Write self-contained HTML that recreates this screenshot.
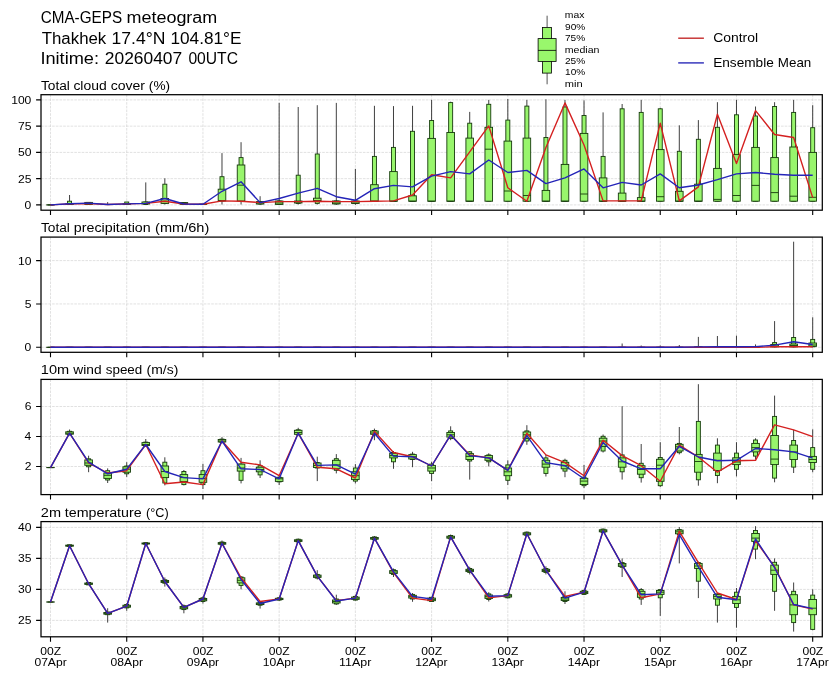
<!DOCTYPE html><html><head><meta charset="utf-8"><style>html,body{margin:0;padding:0;background:#fff;width:840px;height:680px;overflow:hidden}svg{display:block;will-change:transform}</style></head><body>
<svg width="840" height="680" viewBox="0 0 840 680">
<rect width="840" height="680" fill="#fff"/>
<g font-family="Liberation Sans, sans-serif" fill="#000">
<text x="40.73" y="22.90" font-size="16.0" textLength="81.37" lengthAdjust="spacingAndGlyphs">CMA-GEPS</text>
<text x="126.51" y="22.90" font-size="16.0" textLength="90.77" lengthAdjust="spacingAndGlyphs">meteogram</text>
<text x="41.72" y="43.70" font-size="16.0" textLength="64.55" lengthAdjust="spacingAndGlyphs">Thakhek</text>
<text x="111.56" y="43.70" font-size="16.0" textLength="53.87" lengthAdjust="spacingAndGlyphs">17.4°N</text>
<text x="170.49" y="43.70" font-size="16.0" textLength="70.95" lengthAdjust="spacingAndGlyphs">104.81°E</text>
<text x="40.42" y="64.20" font-size="16.0" textLength="58.64" lengthAdjust="spacingAndGlyphs">Initime:</text>
<text x="104.83" y="64.20" font-size="16.0" textLength="77.35" lengthAdjust="spacingAndGlyphs">20260407</text>
<text x="188.39" y="64.20" font-size="16.0" textLength="49.61" lengthAdjust="spacingAndGlyphs">00UTC</text>
</g>
<path d="M50.50 94.70V210.20M126.72 94.70V210.20M202.94 94.70V210.20M279.16 94.70V210.20M355.38 94.70V210.20M431.60 94.70V210.20M507.82 94.70V210.20M584.03 94.70V210.20M660.25 94.70V210.20M736.47 94.70V210.20M812.69 94.70V210.20M41.00 204.90H822.30M41.00 178.65H822.30M41.00 152.40H822.30M41.00 126.15H822.30M41.00 99.90H822.30" stroke="#d4d4d4" stroke-width="0.7" stroke-dasharray="2.6 1.1" fill="none"/>
<path d="M50.50 210.20V215.10M126.72 210.20V215.10M202.94 210.20V215.10M279.16 210.20V215.10M355.38 210.20V215.10M431.60 210.20V215.10M507.82 210.20V215.10M584.03 210.20V215.10M660.25 210.20V215.10M736.47 210.20V215.10M812.69 210.20V215.10M41.00 204.90H36.10M41.00 178.65H36.10M41.00 152.40H36.10M41.00 126.15H36.10M41.00 99.90H36.10" stroke="#000" stroke-width="1.1" fill="none"/>
<g font-family="Liberation Sans, sans-serif" fill="#000">
<text x="24.64" y="208.80" font-size="11.4" textLength="6.73" lengthAdjust="spacingAndGlyphs">0</text>
<text x="17.95" y="182.55" font-size="11.4" textLength="13.46" lengthAdjust="spacingAndGlyphs">25</text>
<text x="17.91" y="156.30" font-size="11.4" textLength="13.46" lengthAdjust="spacingAndGlyphs">50</text>
<text x="17.95" y="130.05" font-size="11.4" textLength="13.46" lengthAdjust="spacingAndGlyphs">75</text>
<text x="11.18" y="103.80" font-size="11.4" textLength="20.19" lengthAdjust="spacingAndGlyphs">100</text>
</g>
<g font-family="Liberation Sans, sans-serif" fill="#000"><text x="40.91" y="89.50" font-size="12.0" textLength="28.96" lengthAdjust="spacingAndGlyphs">Total</text></g>
<g font-family="Liberation Sans, sans-serif" fill="#000"><text x="73.41" y="89.50" font-size="12.0" textLength="33.29" lengthAdjust="spacingAndGlyphs">cloud</text></g>
<g font-family="Liberation Sans, sans-serif" fill="#000"><text x="110.70" y="89.50" font-size="12.0" textLength="34.33" lengthAdjust="spacingAndGlyphs">cover</text></g>
<g font-family="Liberation Sans, sans-serif" fill="#000"><text x="148.86" y="89.50" font-size="12.0" textLength="21.19" lengthAdjust="spacingAndGlyphs">(%)</text></g>
<rect x="41.0" y="94.7" width="781.30" height="115.50" fill="none" stroke="#000" stroke-width="1.25"/>
<path d="M50.50 237.10V352.30M126.72 237.10V352.30M202.94 237.10V352.30M279.16 237.10V352.30M355.38 237.10V352.30M431.60 237.10V352.30M507.82 237.10V352.30M584.03 237.10V352.30M660.25 237.10V352.30M736.47 237.10V352.30M812.69 237.10V352.30M41.00 347.30H822.30M41.00 303.95H822.30M41.00 260.60H822.30" stroke="#d4d4d4" stroke-width="0.7" stroke-dasharray="2.6 1.1" fill="none"/>
<path d="M50.50 352.30V357.20M126.72 352.30V357.20M202.94 352.30V357.20M279.16 352.30V357.20M355.38 352.30V357.20M431.60 352.30V357.20M507.82 352.30V357.20M584.03 352.30V357.20M660.25 352.30V357.20M736.47 352.30V357.20M812.69 352.30V357.20M41.00 347.30H36.10M41.00 303.95H36.10M41.00 260.60H36.10" stroke="#000" stroke-width="1.1" fill="none"/>
<g font-family="Liberation Sans, sans-serif" fill="#000">
<text x="24.64" y="351.20" font-size="11.4" textLength="6.73" lengthAdjust="spacingAndGlyphs">0</text>
<text x="24.68" y="307.85" font-size="11.4" textLength="6.73" lengthAdjust="spacingAndGlyphs">5</text>
<text x="17.91" y="264.50" font-size="11.4" textLength="13.46" lengthAdjust="spacingAndGlyphs">10</text>
</g>
<g font-family="Liberation Sans, sans-serif" fill="#000"><text x="40.91" y="231.75" font-size="12.0" textLength="28.96" lengthAdjust="spacingAndGlyphs">Total</text></g>
<g font-family="Liberation Sans, sans-serif" fill="#000"><text x="73.88" y="231.75" font-size="12.0" textLength="76.84" lengthAdjust="spacingAndGlyphs">precipitation</text></g>
<g font-family="Liberation Sans, sans-serif" fill="#000"><text x="155.10" y="231.75" font-size="12.0" textLength="54.21" lengthAdjust="spacingAndGlyphs">(mm/6h)</text></g>
<rect x="41.0" y="237.1" width="781.30" height="115.20" fill="none" stroke="#000" stroke-width="1.25"/>
<path d="M50.50 379.40V494.60M126.72 379.40V494.60M202.94 379.40V494.60M279.16 379.40V494.60M355.38 379.40V494.60M431.60 379.40V494.60M507.82 379.40V494.60M584.03 379.40V494.60M660.25 379.40V494.60M736.47 379.40V494.60M812.69 379.40V494.60M41.00 466.50H822.30M41.00 436.50H822.30M41.00 406.50H822.30" stroke="#d4d4d4" stroke-width="0.7" stroke-dasharray="2.6 1.1" fill="none"/>
<path d="M50.50 494.60V499.50M126.72 494.60V499.50M202.94 494.60V499.50M279.16 494.60V499.50M355.38 494.60V499.50M431.60 494.60V499.50M507.82 494.60V499.50M584.03 494.60V499.50M660.25 494.60V499.50M736.47 494.60V499.50M812.69 494.60V499.50M41.00 466.50H36.10M41.00 436.50H36.10M41.00 406.50H36.10" stroke="#000" stroke-width="1.1" fill="none"/>
<g font-family="Liberation Sans, sans-serif" fill="#000">
<text x="24.78" y="470.40" font-size="11.4" textLength="6.73" lengthAdjust="spacingAndGlyphs">2</text>
<text x="24.53" y="440.40" font-size="11.4" textLength="6.73" lengthAdjust="spacingAndGlyphs">4</text>
<text x="24.70" y="410.40" font-size="11.4" textLength="6.73" lengthAdjust="spacingAndGlyphs">6</text>
</g>
<g font-family="Liberation Sans, sans-serif" fill="#000"><text x="40.79" y="373.90" font-size="12.0" textLength="28.37" lengthAdjust="spacingAndGlyphs">10m</text></g>
<g font-family="Liberation Sans, sans-serif" fill="#000"><text x="73.32" y="373.90" font-size="12.0" textLength="28.27" lengthAdjust="spacingAndGlyphs">wind</text></g>
<g font-family="Liberation Sans, sans-serif" fill="#000"><text x="105.73" y="373.90" font-size="12.0" textLength="36.54" lengthAdjust="spacingAndGlyphs">speed</text></g>
<g font-family="Liberation Sans, sans-serif" fill="#000"><text x="146.64" y="373.90" font-size="12.0" textLength="31.73" lengthAdjust="spacingAndGlyphs">(m/s)</text></g>
<rect x="41.0" y="379.4" width="781.30" height="115.20" fill="none" stroke="#000" stroke-width="1.25"/>
<path d="M50.50 521.60V636.80M126.72 521.60V636.80M202.94 521.60V636.80M279.16 521.60V636.80M355.38 521.60V636.80M431.60 521.60V636.80M507.82 521.60V636.80M584.03 521.60V636.80M660.25 521.60V636.80M736.47 521.60V636.80M812.69 521.60V636.80M41.00 620.40H822.30M41.00 589.40H822.30M41.00 558.40H822.30M41.00 527.40H822.30" stroke="#d4d4d4" stroke-width="0.7" stroke-dasharray="2.6 1.1" fill="none"/>
<path d="M50.50 636.80V641.70M126.72 636.80V641.70M202.94 636.80V641.70M279.16 636.80V641.70M355.38 636.80V641.70M431.60 636.80V641.70M507.82 636.80V641.70M584.03 636.80V641.70M660.25 636.80V641.70M736.47 636.80V641.70M812.69 636.80V641.70M41.00 620.40H36.10M41.00 589.40H36.10M41.00 558.40H36.10M41.00 527.40H36.10" stroke="#000" stroke-width="1.1" fill="none"/>
<g font-family="Liberation Sans, sans-serif" fill="#000">
<text x="17.95" y="624.30" font-size="11.4" textLength="13.46" lengthAdjust="spacingAndGlyphs">25</text>
<text x="17.91" y="593.30" font-size="11.4" textLength="13.46" lengthAdjust="spacingAndGlyphs">30</text>
<text x="17.95" y="562.30" font-size="11.4" textLength="13.46" lengthAdjust="spacingAndGlyphs">35</text>
<text x="17.91" y="531.30" font-size="11.4" textLength="13.46" lengthAdjust="spacingAndGlyphs">40</text>
</g>
<g font-family="Liberation Sans, sans-serif" fill="#000"><text x="40.87" y="516.60" font-size="12.0" textLength="20.19" lengthAdjust="spacingAndGlyphs">2m</text></g>
<g font-family="Liberation Sans, sans-serif" fill="#000"><text x="64.88" y="516.60" font-size="12.0" textLength="76.75" lengthAdjust="spacingAndGlyphs">temperature</text></g>
<g font-family="Liberation Sans, sans-serif" fill="#000"><text x="146.01" y="516.60" font-size="12.0" textLength="22.67" lengthAdjust="spacingAndGlyphs">(°C)</text></g>
<rect x="41.0" y="521.6" width="781.30" height="115.20" fill="none" stroke="#000" stroke-width="1.25"/>
<g font-family="Liberation Sans, sans-serif" fill="#000">
<text x="40.23" y="654.50" font-size="11.6" textLength="20.85" lengthAdjust="spacingAndGlyphs">00Z</text>
<text x="34.42" y="666.40" font-size="11.6" textLength="32.29" lengthAdjust="spacingAndGlyphs">07Apr</text>
<text x="116.45" y="654.50" font-size="11.6" textLength="20.85" lengthAdjust="spacingAndGlyphs">00Z</text>
<text x="110.64" y="666.40" font-size="11.6" textLength="32.29" lengthAdjust="spacingAndGlyphs">08Apr</text>
<text x="192.67" y="654.50" font-size="11.6" textLength="20.85" lengthAdjust="spacingAndGlyphs">00Z</text>
<text x="186.86" y="666.40" font-size="11.6" textLength="32.29" lengthAdjust="spacingAndGlyphs">09Apr</text>
<text x="268.89" y="654.50" font-size="11.6" textLength="20.85" lengthAdjust="spacingAndGlyphs">00Z</text>
<text x="262.85" y="666.40" font-size="11.6" textLength="32.29" lengthAdjust="spacingAndGlyphs">10Apr</text>
<text x="345.10" y="654.50" font-size="11.6" textLength="20.85" lengthAdjust="spacingAndGlyphs">00Z</text>
<text x="339.07" y="666.40" font-size="11.6" textLength="32.29" lengthAdjust="spacingAndGlyphs">11Apr</text>
<text x="421.32" y="654.50" font-size="11.6" textLength="20.85" lengthAdjust="spacingAndGlyphs">00Z</text>
<text x="415.29" y="666.40" font-size="11.6" textLength="32.29" lengthAdjust="spacingAndGlyphs">12Apr</text>
<text x="497.54" y="654.50" font-size="11.6" textLength="20.85" lengthAdjust="spacingAndGlyphs">00Z</text>
<text x="491.51" y="666.40" font-size="11.6" textLength="32.29" lengthAdjust="spacingAndGlyphs">13Apr</text>
<text x="573.76" y="654.50" font-size="11.6" textLength="20.85" lengthAdjust="spacingAndGlyphs">00Z</text>
<text x="567.73" y="666.40" font-size="11.6" textLength="32.29" lengthAdjust="spacingAndGlyphs">14Apr</text>
<text x="649.98" y="654.50" font-size="11.6" textLength="20.85" lengthAdjust="spacingAndGlyphs">00Z</text>
<text x="643.95" y="666.40" font-size="11.6" textLength="32.29" lengthAdjust="spacingAndGlyphs">15Apr</text>
<text x="726.20" y="654.50" font-size="11.6" textLength="20.85" lengthAdjust="spacingAndGlyphs">00Z</text>
<text x="720.17" y="666.40" font-size="11.6" textLength="32.29" lengthAdjust="spacingAndGlyphs">16Apr</text>
<text x="802.42" y="654.50" font-size="11.6" textLength="20.85" lengthAdjust="spacingAndGlyphs">00Z</text>
<text x="796.39" y="666.40" font-size="11.6" textLength="32.29" lengthAdjust="spacingAndGlyphs">17Apr</text>
</g>
<path d="M547.1 15.7V27.4M547.1 73.1V84.3" stroke="#555" stroke-width="1"/>
<rect x="542.4" y="27.4" width="9" height="45.7" fill="#99f76c" stroke="#000" stroke-width="0.8"/>
<rect x="538.1" y="38.6" width="18" height="22.8" fill="#99f76c" stroke="#000" stroke-width="0.8"/>
<path d="M538.1 50.4H556.1" stroke="#000" stroke-width="0.8"/>
<g font-family="Liberation Sans, sans-serif" fill="#000">
<text x="564.81" y="18.10" font-size="9.2" textLength="19.60" lengthAdjust="spacingAndGlyphs">max</text>
<text x="565.03" y="29.80" font-size="9.2" textLength="20.23" lengthAdjust="spacingAndGlyphs">90%</text>
<text x="564.98" y="41.10" font-size="9.2" textLength="20.28" lengthAdjust="spacingAndGlyphs">75%</text>
<text x="564.80" y="52.70" font-size="9.2" textLength="34.69" lengthAdjust="spacingAndGlyphs">median</text>
<text x="564.99" y="63.50" font-size="9.2" textLength="20.27" lengthAdjust="spacingAndGlyphs">25%</text>
<text x="565.13" y="75.10" font-size="9.2" textLength="20.12" lengthAdjust="spacingAndGlyphs">10%</text>
<text x="564.76" y="86.80" font-size="9.2" textLength="17.86" lengthAdjust="spacingAndGlyphs">min</text>
</g>
<path d="M678.2 38.2H703.9" stroke="#c42a2a" stroke-width="1.39"/><path d="M678.2 62.9H703.9" stroke="#2a2ab8" stroke-width="1.39"/>
<g font-family="Liberation Sans, sans-serif" fill="#000"><text x="713.19" y="42.30" font-size="13.1" textLength="44.84" lengthAdjust="spacingAndGlyphs">Control</text><text x="713.18" y="66.80" font-size="13.1" textLength="60.62" lengthAdjust="spacingAndGlyphs">Ensemble</text><text x="777.80" y="66.80" font-size="13.1" textLength="33.47" lengthAdjust="spacingAndGlyphs">Mean</text></g>
<path d="M69.55 195.00V204.90M88.61 202.00V204.90M107.66 202.10V204.90M126.72 202.00V204.90M145.77 182.40V204.90M164.83 178.30V204.50M183.88 203.00V204.90M202.94 204.30V204.90M221.99 153.10V204.50M241.05 142.20V204.50M260.10 196.20V204.90M279.16 102.90V204.90M298.21 107.00V204.50M317.27 105.20V204.50M336.32 102.90V204.90M355.38 168.90V204.90M374.43 105.80V201.30M393.49 106.10V201.30M412.54 105.80V201.30M431.60 99.90V201.30M450.65 101.70V201.30M469.71 111.90V201.30M488.76 99.90V201.30M507.82 99.00V201.30M526.87 99.90V201.30M545.92 99.30V201.30M564.98 99.90V201.30M584.03 100.40V201.30M603.09 112.40V201.30M622.14 104.00V201.30M641.20 99.90V201.30M660.25 107.90V201.30M679.31 125.30V201.30M698.36 120.10V201.30M717.42 102.20V201.30M736.47 99.90V201.30M755.53 106.50V201.30M774.58 102.20V201.30M793.64 99.90V201.30M812.69 105.20V201.30" stroke="#2a2a2a" stroke-width="0.9" fill="none"/>
<g fill="#98f56c" stroke="#163a0c" stroke-width="0.9"><rect x="48.50" y="204.90" width="4.0" height="0.01"/><rect x="46.70" y="204.90" width="7.6" height="0.01"/><rect x="67.55" y="201.20" width="4.0" height="3.30"/><rect x="65.75" y="203.90" width="7.6" height="0.50"/><rect x="86.61" y="202.40" width="4.0" height="2.10"/><rect x="84.81" y="202.40" width="7.6" height="2.10"/><rect x="105.66" y="204.50" width="4.0" height="0.01"/><rect x="103.86" y="204.50" width="7.6" height="0.01"/><rect x="124.72" y="202.00" width="4.0" height="2.50"/><rect x="122.92" y="203.80" width="7.6" height="0.50"/><rect x="143.77" y="202.00" width="4.0" height="2.50"/><rect x="141.97" y="202.00" width="7.6" height="2.00"/><rect x="162.83" y="184.20" width="4.0" height="19.20"/><rect x="161.03" y="198.50" width="7.6" height="4.90"/><rect x="181.88" y="202.60" width="4.0" height="1.90"/><rect x="180.08" y="202.60" width="7.6" height="1.70"/><rect x="200.94" y="204.30" width="4.0" height="0.01"/><rect x="199.14" y="204.30" width="7.6" height="0.01"/><rect x="219.99" y="176.70" width="4.0" height="24.30"/><rect x="218.19" y="189.20" width="7.6" height="11.80"/><rect x="239.05" y="157.60" width="4.0" height="43.40"/><rect x="237.25" y="165.00" width="7.6" height="36.00"/><rect x="258.10" y="201.60" width="4.0" height="2.40"/><rect x="256.30" y="201.60" width="7.6" height="2.40"/><rect x="277.16" y="201.00" width="4.0" height="3.40"/><rect x="275.36" y="201.00" width="7.6" height="3.40"/><rect x="296.21" y="175.20" width="4.0" height="28.20"/><rect x="294.41" y="201.00" width="7.6" height="2.00"/><rect x="315.27" y="154.00" width="4.0" height="49.40"/><rect x="313.47" y="198.20" width="7.6" height="3.40"/><rect x="334.32" y="201.00" width="4.0" height="2.90"/><rect x="332.52" y="201.00" width="7.6" height="2.90"/><rect x="353.38" y="201.00" width="4.0" height="2.40"/><rect x="351.58" y="201.00" width="7.6" height="2.40"/><rect x="372.43" y="156.40" width="4.0" height="44.80"/><rect x="370.63" y="184.70" width="7.6" height="16.50"/><rect x="391.49" y="147.40" width="4.0" height="53.80"/><rect x="389.69" y="171.60" width="7.6" height="29.60"/><rect x="410.54" y="131.30" width="4.0" height="69.90"/><rect x="408.74" y="195.80" width="7.6" height="5.40"/><rect x="429.60" y="120.50" width="4.0" height="80.70"/><rect x="427.80" y="138.40" width="7.6" height="62.80"/><rect x="448.65" y="102.60" width="4.0" height="98.60"/><rect x="446.85" y="132.50" width="7.6" height="68.70"/><rect x="467.71" y="123.20" width="4.0" height="78.00"/><rect x="465.91" y="138.10" width="7.6" height="63.10"/><rect x="486.76" y="104.30" width="4.0" height="96.90"/><rect x="484.96" y="127.30" width="7.6" height="73.90"/><rect x="505.82" y="120.10" width="4.0" height="81.10"/><rect x="504.02" y="141.10" width="7.6" height="60.10"/><rect x="524.87" y="106.10" width="4.0" height="95.10"/><rect x="523.07" y="138.10" width="7.6" height="63.10"/><rect x="543.92" y="137.50" width="4.0" height="63.70"/><rect x="542.12" y="190.40" width="7.6" height="10.80"/><rect x="562.98" y="107.00" width="4.0" height="94.20"/><rect x="561.18" y="164.40" width="7.6" height="36.80"/><rect x="582.03" y="115.50" width="4.0" height="85.70"/><rect x="580.23" y="133.40" width="7.6" height="67.80"/><rect x="601.09" y="156.40" width="4.0" height="44.80"/><rect x="599.29" y="177.90" width="7.6" height="23.30"/><rect x="620.14" y="108.80" width="4.0" height="92.40"/><rect x="618.34" y="193.10" width="7.6" height="8.10"/><rect x="639.20" y="112.40" width="4.0" height="88.80"/><rect x="637.40" y="197.60" width="7.6" height="3.60"/><rect x="658.25" y="108.80" width="4.0" height="92.40"/><rect x="656.45" y="149.60" width="7.6" height="51.60"/><rect x="677.31" y="151.30" width="4.0" height="49.90"/><rect x="675.51" y="191.30" width="7.6" height="9.90"/><rect x="696.36" y="139.30" width="4.0" height="61.90"/><rect x="694.56" y="184.20" width="7.6" height="17.00"/><rect x="715.42" y="127.30" width="4.0" height="73.90"/><rect x="713.62" y="168.40" width="7.6" height="32.80"/><rect x="734.47" y="114.80" width="4.0" height="86.40"/><rect x="732.67" y="154.60" width="7.6" height="46.60"/><rect x="753.53" y="116.00" width="4.0" height="85.20"/><rect x="751.73" y="147.40" width="7.6" height="53.80"/><rect x="772.58" y="106.50" width="4.0" height="94.70"/><rect x="770.78" y="157.60" width="7.6" height="43.60"/><rect x="791.64" y="112.40" width="4.0" height="88.80"/><rect x="789.84" y="147.00" width="7.6" height="54.20"/><rect x="810.69" y="127.70" width="4.0" height="73.50"/><rect x="808.89" y="152.40" width="7.6" height="48.80"/></g>
<path d="M46.70 204.90H54.30M65.75 204.20H73.35M84.81 203.50H92.41M103.86 204.50H111.46M122.92 204.10H130.52M141.97 203.50H149.57M161.03 201.20H168.63M180.08 203.50H187.68M199.14 204.30H206.74M218.19 200.50H225.79M237.25 185.20H244.85M256.30 203.00H263.90M275.36 203.00H282.96M294.41 202.00H302.01M313.47 200.50H321.07M332.52 203.00H340.12M351.58 203.00H359.18M370.63 201.20H378.23M389.69 201.20H397.29M408.74 201.20H416.34M427.80 201.20H435.40M446.85 201.20H454.45M465.91 201.20H473.51M484.96 149.20H492.56M504.02 191.00H511.62M523.07 195.50H530.67M542.12 201.20H549.72M561.18 201.20H568.78M580.23 194.00H587.83M599.29 201.20H606.89M618.34 201.20H625.94M637.40 201.20H645.00M656.45 196.70H664.05M675.51 201.20H683.11M694.56 201.20H702.16M713.62 199.40H721.22M732.67 195.50H740.27M751.73 185.40H759.33M770.78 192.60H778.38M789.84 196.20H797.44M808.89 197.30H816.49" stroke="#163a0c" stroke-width="0.9" fill="none"/>
<polyline points="50.50,204.90 69.55,203.90 88.61,203.50 107.66,204.50 126.72,203.90 145.77,203.40 164.83,201.20 183.88,204.00 202.94,204.30 221.99,200.90 241.05,201.20 260.10,202.60 279.16,201.60 298.21,201.60 317.27,201.20 336.32,201.60 355.38,201.60 374.43,201.20 393.49,200.90 412.54,195.00 431.60,174.70 450.65,177.90 469.71,151.90 488.76,125.90 507.82,187.80 526.87,201.20 545.92,147.40 564.98,102.90 584.03,145.00 603.09,200.90 622.14,200.90 641.20,200.90 660.25,123.20 679.31,200.90 698.36,186.90 717.42,114.20 736.47,163.50 755.53,110.60 774.58,134.50 793.64,137.50 812.69,197.60" fill="none" stroke="#d42020" stroke-width="1.39" stroke-linejoin="round"/>
<polyline points="50.50,204.90 69.55,203.70 88.61,203.10 107.66,204.50 126.72,203.90 145.77,203.40 164.83,198.50 183.88,204.00 202.94,204.30 221.99,191.30 241.05,181.80 260.10,202.60 279.16,198.50 298.21,193.10 317.27,188.30 336.32,196.70 355.38,200.30 374.43,188.70 393.49,185.40 412.54,186.90 431.60,176.10 450.65,171.60 469.71,173.90 488.76,160.00 507.82,172.50 526.87,170.40 545.92,183.60 564.98,177.90 584.03,168.90 603.09,187.80 622.14,182.40 641.20,185.00 660.25,173.90 679.31,187.80 698.36,185.00 717.42,179.70 736.47,173.90 755.53,172.50 774.58,174.30 793.64,175.20 812.69,175.20" fill="none" stroke="#2424b8" stroke-width="1.39" stroke-linejoin="round"/>
<path d="M622.14 343.50V347.30M641.20 345.50V347.30M660.25 345.50V347.30M679.31 345.00V347.30M698.36 336.90V347.30M717.42 336.00V347.30M736.47 335.70V347.30M755.53 344.40V347.30M774.58 321.10V347.30M793.64 241.70V347.30M812.69 317.30V347.30" stroke="#2a2a2a" stroke-width="0.9" fill="none"/>
<g fill="#98f56c" stroke="#163a0c" stroke-width="0.9"><rect x="48.50" y="347.30" width="4.0" height="0.01"/><rect x="46.70" y="347.30" width="7.6" height="0.01"/><rect x="67.55" y="347.30" width="4.0" height="0.01"/><rect x="65.75" y="347.30" width="7.6" height="0.01"/><rect x="86.61" y="347.30" width="4.0" height="0.01"/><rect x="84.81" y="347.30" width="7.6" height="0.01"/><rect x="105.66" y="347.30" width="4.0" height="0.01"/><rect x="103.86" y="347.30" width="7.6" height="0.01"/><rect x="124.72" y="347.30" width="4.0" height="0.01"/><rect x="122.92" y="347.30" width="7.6" height="0.01"/><rect x="143.77" y="347.30" width="4.0" height="0.01"/><rect x="141.97" y="347.30" width="7.6" height="0.01"/><rect x="162.83" y="347.30" width="4.0" height="0.01"/><rect x="161.03" y="347.30" width="7.6" height="0.01"/><rect x="181.88" y="347.30" width="4.0" height="0.01"/><rect x="180.08" y="347.30" width="7.6" height="0.01"/><rect x="200.94" y="347.30" width="4.0" height="0.01"/><rect x="199.14" y="347.30" width="7.6" height="0.01"/><rect x="219.99" y="347.30" width="4.0" height="0.01"/><rect x="218.19" y="347.30" width="7.6" height="0.01"/><rect x="239.05" y="347.30" width="4.0" height="0.01"/><rect x="237.25" y="347.30" width="7.6" height="0.01"/><rect x="258.10" y="347.30" width="4.0" height="0.01"/><rect x="256.30" y="347.30" width="7.6" height="0.01"/><rect x="277.16" y="347.30" width="4.0" height="0.01"/><rect x="275.36" y="347.30" width="7.6" height="0.01"/><rect x="296.21" y="347.30" width="4.0" height="0.01"/><rect x="294.41" y="347.30" width="7.6" height="0.01"/><rect x="315.27" y="347.30" width="4.0" height="0.01"/><rect x="313.47" y="347.30" width="7.6" height="0.01"/><rect x="334.32" y="347.30" width="4.0" height="0.01"/><rect x="332.52" y="347.30" width="7.6" height="0.01"/><rect x="353.38" y="347.30" width="4.0" height="0.01"/><rect x="351.58" y="347.30" width="7.6" height="0.01"/><rect x="372.43" y="347.30" width="4.0" height="0.01"/><rect x="370.63" y="347.30" width="7.6" height="0.01"/><rect x="391.49" y="347.30" width="4.0" height="0.01"/><rect x="389.69" y="347.30" width="7.6" height="0.01"/><rect x="410.54" y="347.30" width="4.0" height="0.01"/><rect x="408.74" y="347.30" width="7.6" height="0.01"/><rect x="429.60" y="347.30" width="4.0" height="0.01"/><rect x="427.80" y="347.30" width="7.6" height="0.01"/><rect x="448.65" y="347.30" width="4.0" height="0.01"/><rect x="446.85" y="347.30" width="7.6" height="0.01"/><rect x="467.71" y="347.30" width="4.0" height="0.01"/><rect x="465.91" y="347.30" width="7.6" height="0.01"/><rect x="486.76" y="347.30" width="4.0" height="0.01"/><rect x="484.96" y="347.30" width="7.6" height="0.01"/><rect x="505.82" y="347.30" width="4.0" height="0.01"/><rect x="504.02" y="347.30" width="7.6" height="0.01"/><rect x="524.87" y="347.30" width="4.0" height="0.01"/><rect x="523.07" y="347.30" width="7.6" height="0.01"/><rect x="543.92" y="347.30" width="4.0" height="0.01"/><rect x="542.12" y="347.30" width="7.6" height="0.01"/><rect x="562.98" y="347.30" width="4.0" height="0.01"/><rect x="561.18" y="347.30" width="7.6" height="0.01"/><rect x="582.03" y="347.30" width="4.0" height="0.01"/><rect x="580.23" y="347.30" width="7.6" height="0.01"/><rect x="601.09" y="347.30" width="4.0" height="0.01"/><rect x="599.29" y="347.30" width="7.6" height="0.01"/><rect x="620.14" y="347.30" width="4.0" height="0.01"/><rect x="618.34" y="347.30" width="7.6" height="0.01"/><rect x="639.20" y="347.30" width="4.0" height="0.01"/><rect x="637.40" y="347.30" width="7.6" height="0.01"/><rect x="658.25" y="347.30" width="4.0" height="0.01"/><rect x="656.45" y="347.30" width="7.6" height="0.01"/><rect x="677.31" y="347.30" width="4.0" height="0.01"/><rect x="675.51" y="347.30" width="7.6" height="0.01"/><rect x="696.36" y="346.80" width="4.0" height="0.50"/><rect x="694.56" y="346.80" width="7.6" height="0.50"/><rect x="715.42" y="347.30" width="4.0" height="0.01"/><rect x="713.62" y="347.30" width="7.6" height="0.01"/><rect x="734.47" y="347.30" width="4.0" height="0.01"/><rect x="732.67" y="347.30" width="7.6" height="0.01"/><rect x="753.53" y="347.30" width="4.0" height="0.01"/><rect x="751.73" y="347.30" width="7.6" height="0.01"/><rect x="772.58" y="342.60" width="4.0" height="4.20"/><rect x="770.78" y="344.50" width="7.6" height="2.30"/><rect x="791.64" y="337.50" width="4.0" height="9.30"/><rect x="789.84" y="344.00" width="7.6" height="2.80"/><rect x="810.69" y="339.40" width="4.0" height="7.40"/><rect x="808.89" y="343.00" width="7.6" height="3.40"/></g>
<path d="M46.70 347.30H54.30M65.75 347.30H73.35M84.81 347.30H92.41M103.86 347.30H111.46M122.92 347.30H130.52M141.97 347.30H149.57M161.03 347.30H168.63M180.08 347.30H187.68M199.14 347.30H206.74M218.19 347.30H225.79M237.25 347.30H244.85M256.30 347.30H263.90M275.36 347.30H282.96M294.41 347.30H302.01M313.47 347.30H321.07M332.52 347.30H340.12M351.58 347.30H359.18M370.63 347.30H378.23M389.69 347.30H397.29M408.74 347.30H416.34M427.80 347.30H435.40M446.85 347.30H454.45M465.91 347.30H473.51M484.96 347.30H492.56M504.02 347.30H511.62M523.07 347.30H530.67M542.12 347.30H549.72M561.18 347.30H568.78M580.23 347.30H587.83M599.29 347.30H606.89M618.34 347.30H625.94M637.40 347.30H645.00M656.45 347.30H664.05M675.51 347.30H683.11M694.56 347.30H702.16M713.62 347.30H721.22M732.67 347.30H740.27M751.73 347.30H759.33M770.78 346.00H778.38M789.84 345.50H797.44M808.89 345.00H816.49" stroke="#163a0c" stroke-width="0.9" fill="none"/>
<polyline points="50.50,347.30 69.55,347.30 88.61,347.30 107.66,347.30 126.72,347.30 145.77,347.30 164.83,347.30 183.88,347.30 202.94,347.30 221.99,347.30 241.05,347.30 260.10,347.30 279.16,347.30 298.21,347.30 317.27,347.30 336.32,347.30 355.38,347.30 374.43,347.30 393.49,347.30 412.54,347.30 431.60,347.30 450.65,347.30 469.71,347.30 488.76,347.30 507.82,347.30 526.87,347.30 545.92,347.30 564.98,347.30 584.03,347.30 603.09,347.30 622.14,347.30 641.20,347.30 660.25,347.30 679.31,347.30 698.36,347.30 717.42,347.30 736.47,347.30 755.53,347.30 774.58,346.80 793.64,346.80 812.69,346.80" fill="none" stroke="#d42020" stroke-width="1.39" stroke-linejoin="round"/>
<polyline points="50.50,347.30 69.55,347.30 88.61,347.30 107.66,347.30 126.72,347.30 145.77,347.30 164.83,347.30 183.88,347.30 202.94,347.30 221.99,347.30 241.05,347.30 260.10,347.30 279.16,347.30 298.21,347.30 317.27,347.30 336.32,347.30 355.38,347.30 374.43,347.30 393.49,347.30 412.54,347.30 431.60,347.30 450.65,347.30 469.71,347.30 488.76,347.30 507.82,347.30 526.87,347.30 545.92,347.30 564.98,347.30 584.03,347.30 603.09,347.30 622.14,347.30 641.20,347.30 660.25,347.30 679.31,347.30 698.36,346.90 717.42,346.80 736.47,346.80 755.53,346.60 774.58,345.10 793.64,341.70 812.69,344.50" fill="none" stroke="#2424b8" stroke-width="1.39" stroke-linejoin="round"/>
<path d="M69.55 429.50V435.50M88.61 455.70V472.20M107.66 468.40V483.00M126.72 462.20V476.90M145.77 439.00V446.80M164.83 457.30V485.40M183.88 470.00V485.40M202.94 463.80V489.00M221.99 437.10V443.50M241.05 457.90V483.40M260.10 460.30V478.00M279.16 475.70V485.00M298.21 427.80V435.50M317.27 456.70V481.10M336.32 454.10V473.40M355.38 464.10V483.40M374.43 428.60V440.20M393.49 451.00V468.80M412.54 451.80V467.20M431.60 461.80V481.10M450.65 426.30V440.20M469.71 451.00V479.60M488.76 453.30V466.40M507.82 460.30V485.00M526.87 425.20V444.80M545.92 454.90V476.50M564.98 458.70V477.20M584.03 464.90V488.00M603.09 434.50V452.50M622.14 406.20V479.60M641.20 444.00V482.60M660.25 442.20V487.00M679.31 427.00V454.40M698.36 384.20V485.70M717.42 438.30V483.20M736.47 442.20V476.40M755.53 438.30V459.50M774.58 395.60V482.30M793.64 429.90V473.00M812.69 429.40V472.20" stroke="#2a2a2a" stroke-width="0.9" fill="none"/>
<g fill="#98f56c" stroke="#163a0c" stroke-width="0.9"><rect x="48.50" y="467.60" width="4.0" height="0.01"/><rect x="46.70" y="467.60" width="7.6" height="0.01"/><rect x="67.55" y="431.30" width="4.0" height="3.40"/><rect x="65.75" y="431.80" width="7.6" height="2.40"/><rect x="86.61" y="458.80" width="4.0" height="8.00"/><rect x="84.81" y="459.90" width="7.6" height="5.40"/><rect x="105.66" y="470.70" width="4.0" height="9.30"/><rect x="103.86" y="473.00" width="7.6" height="5.40"/><rect x="124.72" y="466.00" width="4.0" height="7.80"/><rect x="122.92" y="466.80" width="7.6" height="5.40"/><rect x="143.77" y="442.10" width="4.0" height="3.90"/><rect x="141.97" y="442.60" width="7.6" height="2.90"/><rect x="162.83" y="462.20" width="4.0" height="20.80"/><rect x="161.03" y="466.00" width="7.6" height="11.60"/><rect x="181.88" y="471.50" width="4.0" height="13.10"/><rect x="180.08" y="474.60" width="7.6" height="6.90"/><rect x="200.94" y="470.70" width="4.0" height="13.90"/><rect x="199.14" y="474.60" width="7.6" height="7.70"/><rect x="219.99" y="439.10" width="4.0" height="3.40"/><rect x="218.19" y="439.50" width="7.6" height="2.50"/><rect x="239.05" y="464.10" width="4.0" height="16.20"/><rect x="237.25" y="464.10" width="7.6" height="7.00"/><rect x="258.10" y="465.70" width="4.0" height="9.20"/><rect x="256.30" y="467.20" width="7.6" height="4.60"/><rect x="277.16" y="477.20" width="4.0" height="4.70"/><rect x="275.36" y="477.70" width="7.6" height="3.70"/><rect x="296.21" y="429.80" width="4.0" height="5.00"/><rect x="294.41" y="430.30" width="7.6" height="4.00"/><rect x="315.27" y="462.60" width="4.0" height="5.40"/><rect x="313.47" y="463.00" width="7.6" height="4.50"/><rect x="334.32" y="458.70" width="4.0" height="11.60"/><rect x="332.52" y="460.30" width="7.6" height="8.50"/><rect x="353.38" y="468.00" width="4.0" height="13.10"/><rect x="351.58" y="471.80" width="7.6" height="7.80"/><rect x="372.43" y="430.50" width="4.0" height="4.30"/><rect x="370.63" y="431.00" width="7.6" height="3.30"/><rect x="391.49" y="452.50" width="4.0" height="9.30"/><rect x="389.69" y="453.30" width="7.6" height="4.60"/><rect x="410.54" y="454.10" width="4.0" height="5.40"/><rect x="408.74" y="454.60" width="7.6" height="4.40"/><rect x="429.60" y="464.10" width="4.0" height="9.30"/><rect x="427.80" y="465.40" width="7.6" height="5.70"/><rect x="448.65" y="430.90" width="4.0" height="7.70"/><rect x="446.85" y="432.50" width="7.6" height="4.60"/><rect x="467.71" y="451.80" width="4.0" height="9.20"/><rect x="465.91" y="453.60" width="7.6" height="5.90"/><rect x="486.76" y="454.90" width="4.0" height="6.90"/><rect x="484.96" y="455.60" width="7.6" height="4.70"/><rect x="505.82" y="464.90" width="4.0" height="15.40"/><rect x="504.02" y="468.00" width="7.6" height="7.70"/><rect x="524.87" y="430.90" width="4.0" height="10.10"/><rect x="523.07" y="432.00" width="7.6" height="6.60"/><rect x="543.92" y="457.90" width="4.0" height="15.50"/><rect x="542.12" y="460.30" width="7.6" height="6.90"/><rect x="562.98" y="460.30" width="4.0" height="10.80"/><rect x="561.18" y="462.30" width="7.6" height="6.50"/><rect x="582.03" y="477.20" width="4.0" height="8.50"/><rect x="580.23" y="478.30" width="7.6" height="6.20"/><rect x="601.09" y="436.30" width="4.0" height="14.70"/><rect x="599.29" y="438.20" width="7.6" height="8.20"/><rect x="620.14" y="454.90" width="4.0" height="16.90"/><rect x="618.34" y="457.90" width="7.6" height="9.30"/><rect x="639.20" y="463.30" width="4.0" height="14.40"/><rect x="637.40" y="465.70" width="7.6" height="8.50"/><rect x="658.25" y="457.50" width="4.0" height="28.20"/><rect x="656.45" y="459.30" width="7.6" height="22.00"/><rect x="677.31" y="443.40" width="4.0" height="9.30"/><rect x="675.51" y="444.30" width="7.6" height="6.70"/><rect x="696.36" y="421.40" width="4.0" height="58.40"/><rect x="694.56" y="454.40" width="7.6" height="17.80"/><rect x="715.42" y="445.10" width="4.0" height="30.40"/><rect x="713.62" y="453.10" width="7.6" height="17.40"/><rect x="734.47" y="453.10" width="4.0" height="16.20"/><rect x="732.67" y="457.80" width="7.6" height="6.80"/><rect x="753.53" y="440.00" width="4.0" height="16.10"/><rect x="751.73" y="443.40" width="7.6" height="8.50"/><rect x="772.58" y="416.40" width="4.0" height="61.70"/><rect x="770.78" y="435.50" width="7.6" height="29.10"/><rect x="791.64" y="440.50" width="4.0" height="26.60"/><rect x="789.84" y="445.10" width="7.6" height="14.40"/><rect x="810.69" y="447.60" width="4.0" height="21.70"/><rect x="808.89" y="456.40" width="7.6" height="6.10"/></g>
<path d="M46.70 467.60H54.30M65.75 433.20H73.35M84.81 463.00H92.41M103.86 475.30H111.46M122.92 469.20H130.52M141.97 444.50H149.57M161.03 471.50H168.63M180.08 477.60H187.68M199.14 478.40H206.74M218.19 441.00H225.79M237.25 468.00H244.85M256.30 469.50H263.90M275.36 478.80H282.96M294.41 432.50H302.01M313.47 465.50H321.07M332.52 464.90H340.12M351.58 475.70H359.18M370.63 433.00H378.23M389.69 455.60H397.29M408.74 456.70H416.34M427.80 468.00H435.40M446.85 434.80H454.45M465.91 456.40H473.51M484.96 457.90H492.56M504.02 471.80H511.62M523.07 434.80H530.67M542.12 464.10H549.72M561.18 465.70H568.78M580.23 481.10H587.83M599.29 441.00H606.89M618.34 461.80H625.94M637.40 469.50H645.00M656.45 465.20H664.05M675.51 446.80H683.11M694.56 461.50H702.16M713.62 460.30H721.22M732.67 462.00H740.27M751.73 447.60H759.33M770.78 459.10H778.38M789.84 451.90H797.44M808.89 459.50H816.49" stroke="#163a0c" stroke-width="0.9" fill="none"/>
<polyline points="50.50,467.60 69.55,433.20 88.61,463.00 107.66,473.00 126.72,470.70 145.77,444.50 164.83,483.80 183.88,482.00 202.94,484.60 221.99,441.00 241.05,462.30 260.10,464.90 279.16,475.70 298.21,433.20 317.27,467.20 336.32,468.80 355.38,478.00 374.43,431.40 393.49,452.50 412.54,456.70 431.60,466.00 450.65,434.80 469.71,454.90 488.76,457.90 507.82,470.30 526.87,433.20 545.92,454.90 564.98,462.60 584.03,475.70 603.09,440.20 622.14,455.60 641.20,465.70 660.25,481.30 679.31,445.10 698.36,457.00 717.42,472.20 736.47,460.80 755.53,460.30 774.58,424.80 793.64,429.90 812.69,436.70" fill="none" stroke="#d42020" stroke-width="1.39" stroke-linejoin="round"/>
<polyline points="50.50,467.60 69.55,433.20 88.61,462.20 107.66,473.80 126.72,469.20 145.77,444.50 164.83,471.50 183.88,477.60 202.94,478.90 221.99,441.00 241.05,468.80 260.10,469.50 279.16,478.80 298.21,433.20 317.27,465.40 336.32,464.90 355.38,474.20 374.43,433.20 393.49,456.10 412.54,456.70 431.60,466.00 450.65,434.80 469.71,455.60 488.76,457.90 507.82,470.30 526.87,435.60 545.92,462.60 564.98,465.70 584.03,478.80 603.09,442.50 622.14,461.00 641.20,468.80 660.25,468.80 679.31,446.30 698.36,457.00 717.42,460.80 736.47,460.30 755.53,448.50 774.58,449.70 793.64,451.90 812.69,458.10" fill="none" stroke="#2424b8" stroke-width="1.39" stroke-linejoin="round"/>
<path d="M69.55 544.80V546.50M88.61 582.30V585.00M107.66 608.20V622.60M126.72 603.20V610.80M145.77 542.50V544.50M164.83 577.50V586.60M183.88 604.50V613.30M202.94 596.40V603.50M221.99 540.50V545.70M241.05 576.10V589.30M260.10 601.50V608.60M279.16 597.00V601.00M298.21 538.50V542.50M317.27 570.20V579.50M336.32 594.70V604.90M355.38 594.70V600.60M374.43 536.00V540.50M393.49 568.50V577.00M412.54 593.00V601.80M431.60 597.00V602.00M450.65 534.50V539.50M469.71 566.80V574.40M488.76 592.20V601.50M507.82 593.00V598.50M526.87 531.50V536.00M545.92 566.30V574.40M564.98 591.30V604.00M584.03 589.50V595.00M603.09 528.50V533.00M622.14 558.40V577.00M641.20 588.00V604.90M660.25 589.30V615.90M679.31 527.10V563.40M698.36 561.70V598.10M717.42 593.00V622.60M736.47 588.00V627.70M755.53 526.20V559.20M774.58 558.40V610.80M793.64 582.50V631.60M812.69 589.30V630.20" stroke="#2a2a2a" stroke-width="0.9" fill="none"/>
<g fill="#98f56c" stroke="#163a0c" stroke-width="0.9"><rect x="48.50" y="602.00" width="4.0" height="0.01"/><rect x="46.70" y="602.00" width="7.6" height="0.01"/><rect x="67.55" y="544.80" width="4.0" height="1.70"/><rect x="65.75" y="545.10" width="7.6" height="1.10"/><rect x="86.61" y="582.50" width="4.0" height="2.40"/><rect x="84.81" y="583.00" width="7.6" height="1.40"/><rect x="105.66" y="612.00" width="4.0" height="2.70"/><rect x="103.86" y="612.50" width="7.6" height="1.70"/><rect x="124.72" y="604.50" width="4.0" height="3.40"/><rect x="122.92" y="605.20" width="7.6" height="2.00"/><rect x="143.77" y="542.70" width="4.0" height="1.60"/><rect x="141.97" y="543.00" width="7.6" height="1.00"/><rect x="162.83" y="579.80" width="4.0" height="3.40"/><rect x="161.03" y="580.50" width="7.6" height="2.00"/><rect x="181.88" y="605.70" width="4.0" height="3.90"/><rect x="180.08" y="606.50" width="7.6" height="2.30"/><rect x="200.94" y="597.80" width="4.0" height="3.70"/><rect x="199.14" y="598.50" width="7.6" height="2.30"/><rect x="219.99" y="542.00" width="4.0" height="2.80"/><rect x="218.19" y="542.60" width="7.6" height="1.60"/><rect x="239.05" y="577.00" width="4.0" height="8.40"/><rect x="237.25" y="577.80" width="7.6" height="5.10"/><rect x="258.10" y="602.30" width="4.0" height="2.90"/><rect x="256.30" y="602.90" width="7.6" height="1.70"/><rect x="277.16" y="597.80" width="4.0" height="2.30"/><rect x="275.36" y="598.30" width="7.6" height="1.30"/><rect x="296.21" y="539.20" width="4.0" height="2.80"/><rect x="294.41" y="539.80" width="7.6" height="1.60"/><rect x="315.27" y="574.40" width="4.0" height="3.70"/><rect x="313.47" y="575.10" width="7.6" height="2.30"/><rect x="334.32" y="599.00" width="4.0" height="5.00"/><rect x="332.52" y="600.00" width="7.6" height="3.00"/><rect x="353.38" y="596.40" width="4.0" height="3.70"/><rect x="351.58" y="597.10" width="7.6" height="2.30"/><rect x="372.43" y="536.90" width="4.0" height="2.90"/><rect x="370.63" y="537.50" width="7.6" height="1.70"/><rect x="391.49" y="569.70" width="4.0" height="4.70"/><rect x="389.69" y="570.60" width="7.6" height="2.90"/><rect x="410.54" y="594.40" width="4.0" height="4.60"/><rect x="408.74" y="595.30" width="7.6" height="2.80"/><rect x="429.60" y="597.30" width="4.0" height="4.20"/><rect x="427.80" y="598.10" width="7.6" height="2.60"/><rect x="448.65" y="535.50" width="4.0" height="3.40"/><rect x="446.85" y="536.20" width="7.6" height="2.00"/><rect x="467.71" y="568.50" width="4.0" height="3.90"/><rect x="465.91" y="569.30" width="7.6" height="2.30"/><rect x="486.76" y="593.90" width="4.0" height="5.60"/><rect x="484.96" y="595.00" width="7.6" height="3.40"/><rect x="505.82" y="593.90" width="4.0" height="3.90"/><rect x="504.02" y="594.70" width="7.6" height="2.30"/><rect x="524.87" y="532.10" width="4.0" height="3.40"/><rect x="523.07" y="532.80" width="7.6" height="2.00"/><rect x="543.92" y="568.50" width="4.0" height="3.90"/><rect x="542.12" y="569.30" width="7.6" height="2.30"/><rect x="562.98" y="596.40" width="4.0" height="5.10"/><rect x="561.18" y="597.40" width="7.6" height="3.10"/><rect x="582.03" y="590.50" width="4.0" height="3.90"/><rect x="580.23" y="591.30" width="7.6" height="2.30"/><rect x="601.09" y="529.10" width="4.0" height="3.40"/><rect x="599.29" y="529.80" width="7.6" height="2.00"/><rect x="620.14" y="562.60" width="4.0" height="4.70"/><rect x="618.34" y="563.50" width="7.6" height="2.90"/><rect x="639.20" y="589.60" width="4.0" height="9.40"/><rect x="637.40" y="591.30" width="7.6" height="6.00"/><rect x="658.25" y="589.60" width="4.0" height="8.20"/><rect x="656.45" y="590.50" width="7.6" height="3.90"/><rect x="677.31" y="529.60" width="4.0" height="5.10"/><rect x="675.51" y="530.10" width="7.6" height="3.70"/><rect x="696.36" y="562.60" width="4.0" height="18.60"/><rect x="694.56" y="563.40" width="7.6" height="5.10"/><rect x="715.42" y="593.90" width="4.0" height="11.30"/><rect x="713.62" y="594.40" width="7.6" height="4.60"/><rect x="734.47" y="592.20" width="4.0" height="15.20"/><rect x="732.67" y="596.40" width="7.6" height="7.10"/><rect x="753.53" y="530.50" width="4.0" height="18.60"/><rect x="751.73" y="533.50" width="7.6" height="7.90"/><rect x="772.58" y="562.30" width="4.0" height="29.00"/><rect x="770.78" y="565.10" width="7.6" height="9.30"/><rect x="791.64" y="591.30" width="4.0" height="31.30"/><rect x="789.84" y="594.70" width="7.6" height="20.00"/><rect x="810.69" y="595.10" width="4.0" height="34.30"/><rect x="808.89" y="599.50" width="7.6" height="15.20"/></g>
<path d="M46.70 602.00H54.30M65.75 545.60H73.35M84.81 583.70H92.41M103.86 613.40H111.46M122.92 606.20H130.52M141.97 543.50H149.57M161.03 581.50H168.63M180.08 607.70H187.68M199.14 599.60H206.74M218.19 543.40H225.79M237.25 580.30H244.85M256.30 603.80H263.90M275.36 599.00H282.96M294.41 540.60H302.01M313.47 576.20H321.07M332.52 601.50H340.12M351.58 598.20H359.18M370.63 538.30H378.23M389.69 572.00H397.29M408.74 596.70H416.34M427.80 599.40H435.40M446.85 537.20H454.45M465.91 570.50H473.51M484.96 596.70H492.56M504.02 595.80H511.62M523.07 533.80H530.67M542.12 570.50H549.72M561.18 599.00H568.78M580.23 592.50H587.83M599.29 530.80H606.89M618.34 565.00H625.94M637.40 593.90H645.00M656.45 592.20H664.05M675.51 531.80H683.11M694.56 566.00H702.16M713.62 596.40H721.22M732.67 599.80H740.27M751.73 538.10H759.33M770.78 570.20H778.38M789.84 604.90H797.44M808.89 608.20H816.49" stroke="#163a0c" stroke-width="0.9" fill="none"/>
<polyline points="50.50,602.00 69.55,545.70 88.61,583.70 107.66,613.30 126.72,606.20 145.77,543.50 164.83,581.50 183.88,607.40 202.94,599.00 221.99,543.30 241.05,577.80 260.10,601.50 279.16,599.00 298.21,540.60 317.27,576.10 336.32,600.60 355.38,598.10 374.43,538.20 393.49,572.70 412.54,598.10 431.60,600.60 450.65,536.90 469.71,570.20 488.76,597.90 507.82,595.60 526.87,533.80 545.92,570.20 564.98,596.40 584.03,592.20 603.09,530.80 622.14,565.10 641.20,597.80 660.25,593.90 679.31,531.30 698.36,562.60 717.42,593.00 736.47,599.50 755.53,540.60 774.58,566.80 793.64,604.90 812.69,609.10" fill="none" stroke="#d42020" stroke-width="1.39" stroke-linejoin="round"/>
<polyline points="50.50,602.00 69.55,545.70 88.61,583.70 107.66,613.30 126.72,606.20 145.77,543.50 164.83,581.50 183.88,607.40 202.94,599.00 221.99,543.30 241.05,579.50 260.10,603.50 279.16,599.00 298.21,540.60 317.27,576.10 336.32,601.00 355.38,598.10 374.43,538.20 393.49,571.90 412.54,596.40 431.60,599.00 450.65,536.90 469.71,570.20 488.76,596.20 507.82,595.60 526.87,533.80 545.92,570.20 564.98,598.10 584.03,592.20 603.09,530.80 622.14,565.10 641.20,594.70 660.25,593.90 679.31,534.70 698.36,566.80 717.42,597.30 736.47,599.80 755.53,538.90 774.58,567.70 793.64,604.50 812.69,608.60" fill="none" stroke="#2424b8" stroke-width="1.39" stroke-linejoin="round"/>
</svg></body></html>
